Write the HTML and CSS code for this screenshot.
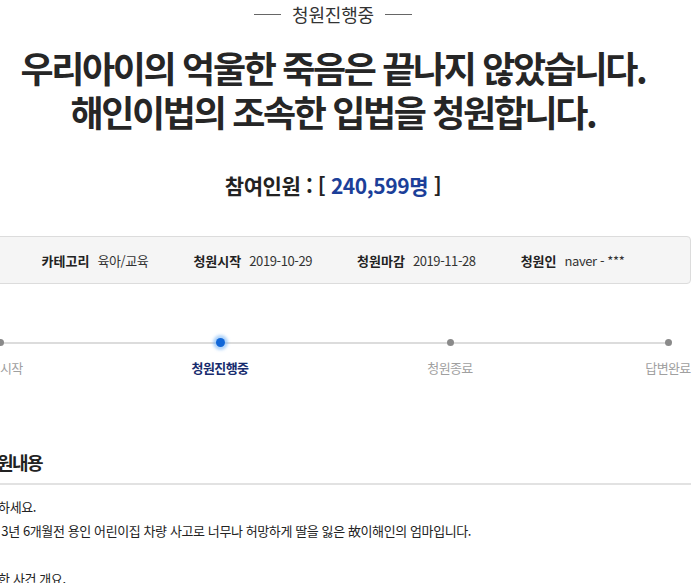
FILE: index.html
```html
<!DOCTYPE html>
<html lang="ko">
<head>
<meta charset="utf-8">
<title>청원진행중</title>
<link rel="stylesheet" href="styles.css">
</head>
<body>
<div class="page">
  <div class="status"><span class="status-line"></span><span class="status-text">청원진행중</span><span class="status-line"></span></div>
  <h1 class="title">우리아이의 억울한 죽음은 끝나지 않았습니다.<br>해인이법의 조속한 입법을 청원합니다.</h1>
  <p class="count">참여인원 : [ <span class="count-num">240,599명</span> ]</p>
  <ul class="info">
    <li class="info-item"><span class="info-label">카테고리</span><span class="info-value">육아/교육</span></li>
    <li class="info-item"><span class="info-label">청원시작</span><span class="info-value">2019-10-29</span></li>
    <li class="info-item"><span class="info-label">청원마감</span><span class="info-value">2019-11-28</span></li>
    <li class="info-item"><span class="info-label">청원인</span><span class="info-value">naver - ***</span></li>
  </ul>
  <ol class="steps">
    <li class="step step-1"><span class="dot"></span><span class="step-label">청원시작</span></li>
    <li class="step step-2 step-active"><span class="dot"></span><span class="step-label">청원진행중</span></li>
    <li class="step step-3"><span class="dot"></span><span class="step-label">청원종료</span></li>
    <li class="step step-4"><span class="dot"></span><span class="step-label">답변완료</span></li>
  </ol>
  <h2 class="section-title">청원내용</h2>
  <div class="content">
    <p>안녕하세요.</p>
    <p>저는 3년 6개월전 용인 어린이집 차량 사고로 너무나 허망하게 딸을 잃은 故이해인의 엄마입니다.</p>
    <p>&nbsp;</p>
    <p>간략한 사건 개요.</p>
  </div>
</div>
</body>
</html>
```

FILE: styles.css
```css
html, body {
  margin: 0;
  padding: 0;
  background: #fff;
  overflow: hidden;
}
body {
  font-family: "Noto Sans CJK KR", "Noto Sans", sans-serif;
  color: #222;
}
.page {
  width: 716px;
  margin-left: -25px;
}
.status {
  display: flex;
  justify-content: center;
  align-items: center;
  gap: 11px;
  height: 28px;
}
.status-text {
  font-size: 18px;
  letter-spacing: -0.2px;
  color: #333;
  line-height: 28px;
}
.status-line {
  width: 27px;
  height: 1px;
  background: #666;
}
.title {
  margin: 17px 0 0;
  text-align: center;
  font-size: 36px;
  line-height: 44px;
  font-weight: 700;
  letter-spacing: -2.35px;
  color: #262626;
}
.count {
  margin: 37px 0 0;
  text-align: center;
  font-size: 21px;
  line-height: 30px;
  font-weight: 700;
  letter-spacing: -0.4px;
  color: #222;
}
.count-num {
  color: #1c3f99;
}
.info {
  list-style: none;
  margin: 36px 0 0;
  padding: 0;
  height: 46px;
  border: 1px solid #dcdcdc;
  border-radius: 4px;
  background: #f5f5f5;
  display: flex;
  justify-content: center;
  align-items: center;
  gap: 45px;
  font-size: 13px;
}
.info-item {
  display: flex;
  gap: 8px;
  align-items: center;
}
.info-label {
  font-weight: 700;
  letter-spacing: 0;
  color: #222;
}
.info-value {
  letter-spacing: -0.4px;
  color: #333;
}
.steps {
  list-style: none;
  margin: 49px 0 0;
  padding: 0;
  display: grid;
  grid-template-columns: 50px 170px 50px 180px 50px 168px 50px;
  background: linear-gradient(#dcdcdc, #dcdcdc) no-repeat 0 9px / 693px 2px;
}
.step-1 { grid-column: 1; }
.step-2 { grid-column: 3; }
.step-3 { grid-column: 5; }
.step-4 { grid-column: 7; }
.step {
  grid-row: 1;
  display: flex;
  flex-direction: column;
  align-items: center;
}
.dot {
  width: 7px;
  height: 7px;
  margin: 6px 0 7px;
  border-radius: 50%;
  background: #8a8a8a;
}
.step-active .dot {
  width: 9px;
  height: 9px;
  margin: 5px 0 6px;
  background: #1167d8;
  box-shadow: 0 0 3px 3px rgba(110, 175, 245, 0.55);
}
.step-label {
  margin-top: 5px;
  font-size: 13px;
  line-height: 20px;
  letter-spacing: -0.6px;
  white-space: nowrap;
  color: #a0a0a0;
}
.step-active .step-label {
  font-weight: 700;
  color: #172c6e;
}
.section-title {
  margin: 71px 0 0;
  padding: 0 0 8px 7px;
  font-size: 18px;
  line-height: 26px;
  font-weight: 700;
  letter-spacing: -1.6px;
  color: #222;
  border-bottom: 2px solid #e2e2e2;
}
.content {
  margin-top: 10px;
  font-size: 13px;
  line-height: 24px;
  letter-spacing: -0.4px;
  color: #222;
}
.content p {
  margin: 0;
  white-space: nowrap;
}
```
